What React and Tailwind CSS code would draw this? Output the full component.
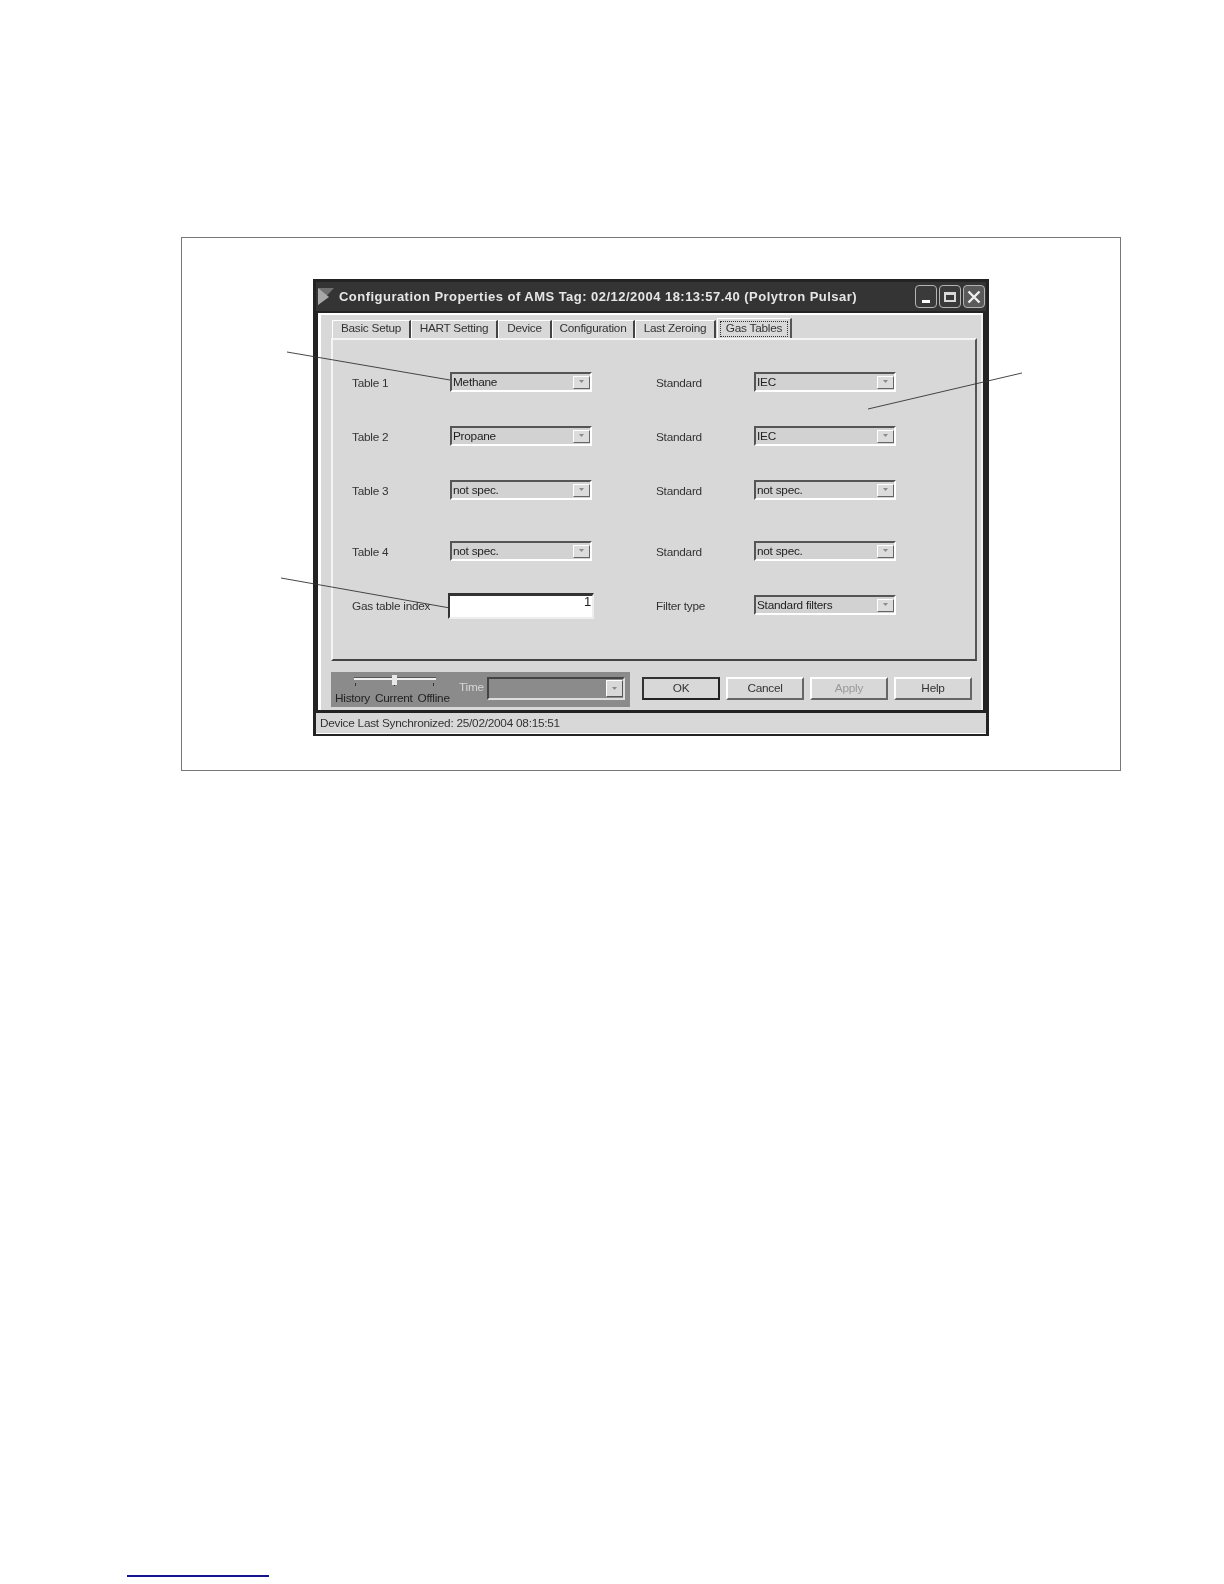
const Arrow = () => (
  <svg width="7" height="4" viewBox="0 0 7 4" className="block">
    <polygon points="1,0 6,0 3.5,3" fill="#8a8a8a" />
  </svg>
);

const Combo = ({ text, className = "" }) => (
  <div className={`w-[142px] h-5 flex items-center border-2 border-t-[#555] border-l-[#555] border-b-white border-r-white bg-[#d2d2d2] ${className}`}>
    <span className="flex-1 pl-[1px] pt-[1px] text-[11.8px] leading-none text-[#222]">{text}</span>
    <div className="w-[17px] h-[13px] flex items-center justify-center bg-[#dcdcdc] border border-t-white border-l-white border-b-[#666] border-r-[#666]">
      <Arrow />
    </div>
  </div>
);

const Label = ({ children, className = "w-[98px]" }) => (
  <div className={`text-[11.8px] leading-none text-[#333] pt-[4px] ${className}`}>{children}</div>
);

const Row = ({ l, lv, r, rv, className = "" }) => (
  <div className={`flex items-center h-5 ${className}`}>
    <div className="w-[304px] flex items-center">
      <Label>{l}</Label>
      <Combo text={lv} />
    </div>
    <div className="flex items-center">
      <Label className="w-[98px]">{r}</Label>
      <Combo text={rv} />
    </div>
  </div>
);

const Tab = ({ w, children, active }) => (
  <div
    className={
      active
        ? "h-5 ml-[1px] px-[2px] pt-[2px] flex bg-[#d8d8d8] border-t border-l border-white border-r-2 border-r-[#555] -mt-[2px]"
        : "h-[18px] pb-[2px] flex items-center justify-center bg-[#d8d8d8] border-t border-l border-white border-r-2 border-r-[#444] text-[11.8px] text-[#333]"
    }
    style={{ width: w }}
  >
    {active ? (
      <div className="flex-1 flex items-center justify-center border border-dotted border-[#333] h-4 text-[11.8px] text-[#333]">
        {children}
      </div>
    ) : (
      children
    )}
  </div>
);

const Btn = ({ children, primary, disabled }) => (
  <div
    className={`w-[78px] h-[23px] flex items-center justify-center text-[11.8px] bg-[#d8d8d8] ${
      primary
        ? "border-2 border-[#222] border-t-[#333] border-l-[#333]"
        : "border-2 border-t-white border-l-white border-b-[#666] border-r-[#666]"
    } ${disabled ? "text-[#9a9a9a]" : "text-[#333]"}`}
  >
    {children}
  </div>
);

const WinBtn = ({ children, className = "bg-[#3a3a3a]" }) => (
  <div className={`w-[22px] h-[23px] flex items-center justify-center rounded-[4px] border-[1.5px] border-[#b4b4b4] ${className}`}>
    {children}
  </div>
);

export default function App() {
  return (
    <div
      className="relative w-[1224px] h-[1584px] bg-white overflow-hidden pt-[237px] pl-[181px] tracking-[-0.25px]"
      style={{ fontFamily: '"Liberation Sans", Arial, sans-serif' }}
    >
      <div className="w-[940px] h-[534px] border border-[#777] pt-[41px] pl-[131px]">
        <div className="w-[676px] h-[457px] flex flex-col bg-[#242424] border-[3px] border-[#232323] blur-[0.35px]">
          {/* Title bar */}
          <div className="h-[29px] shrink-0 flex items-center bg-[#343434] pl-[2px] pr-[1px]">
            <svg width="16" height="17" viewBox="0 0 16 17" className="block shrink-0">
              <polygon points="0,0 16,0 0,17" fill="#6f6f6f" />
              <polygon points="0,0 11,9 0,17" fill="#a8a8a8" />
            </svg>
            <span className="ml-[5px] text-[13px] font-bold tracking-[0.47px] text-[#e6e6e6] whitespace-nowrap">
              Configuration Properties of AMS Tag: 02/12/2004 18:13:57.40 (Polytron Pulsar)
            </span>
            <div className="ml-auto flex gap-[2px]">
              <WinBtn>
                <div className="w-[8px] h-[3px] bg-white mt-[10px]" />
              </WinBtn>
              <WinBtn>
                <div className="w-[12px] h-[10px] border-2 border-t-[3px] border-[#d8d8d8]" />
              </WinBtn>
              <WinBtn className="bg-[#5a5a5a]">
                <svg width="14" height="14" viewBox="0 0 14 14" className="block">
                  <path d="M1.5 1.5 L12.5 12.5 M12.5 1.5 L1.5 12.5" stroke="#f0f0f0" strokeWidth="2.4" />
                </svg>
              </WinBtn>
            </div>
          </div>

          {/* Frame */}
          <div className="h-[402px] shrink-0 mr-[1px] border-t-2 border-l-2 border-[#222] border-r-2 border-b-[3px] bg-[#9a9a9a]">
            <div className="h-full bg-[#d8d8d8] border-t-2 border-l-[3px] border-white border-r-2 border-r-[#f0f0f0] pt-[5px] pl-[10px]">
              {/* Tabs */}
              <div className="flex h-[18px] items-start pl-[1px]">
                <Tab w={79}>Basic Setup</Tab>
                <Tab w={87}>HART Setting</Tab>
                <Tab w={54}>Device</Tab>
                <Tab w={83}>Configuration</Tab>
                <Tab w={81}>Last Zeroing</Tab>
                <Tab w={75} active>Gas Tables</Tab>
              </div>

              {/* Tab pane */}
              <div className="w-[646px] h-[323px] border-l-2 border-t-2 border-[#f4f4f4] border-r-2 border-r-[#555] border-b-2 border-b-[#444] pl-[19px] pt-[32px] bg-[#d8d8d8]">
                <Row l="Table 1" lv="Methane" r="Standard" rv="IEC" />
                <Row l="Table 2" lv="Propane" r="Standard" rv="IEC" className="mt-[34px]" />
                <Row l="Table 3" lv="not spec." r="Standard" rv="not spec." className="mt-[34px]" />
                <Row l="Table 4" lv="not spec." r="Standard" rv="not spec." className="mt-[41px]" />
                <div className="flex items-start h-[26px] mt-[32px]">
                  <div className="w-[304px] flex items-start">
                    <div className="w-[96px] text-[11.8px] leading-none text-[#333] pt-[8px]">Gas table index</div>
                    <div className="w-[146px] h-[26px] border-2 border-t-[3px] border-t-[#333] border-l-[#333] border-b-[#eee] border-r-[#eee] bg-white text-right pr-[1px] text-[13px] leading-[12px] text-[#222]">
                      1
                    </div>
                  </div>
                  <div className="flex items-center mt-[2px]">
                    <Label className="w-[98px]">Filter type</Label>
                    <Combo text="Standard filters" />
                  </div>
                </div>
              </div>

              {/* Bottom row */}
              <div className="flex mt-[11px]">
                <div className="w-[299px] h-[35px] bg-[#8b8b8b] flex">
                  <div className="w-[125px] pt-[5px]">
                    <div className="relative h-[6px] ml-[23px] w-[82px]">
                      <div className="h-[3px] bg-[#f0f0f0] border-t border-[#555]" />
                      <div className="absolute left-[38px] -top-[2px] w-[5px] h-[10px] bg-[#e8e8e8]" />
                    </div>
                    <div className="flex justify-between pl-[24px] pr-[22px] h-[4px]">
                      <div className="w-[1px] h-[3px] bg-[#333]" />
                      <div className="w-[1px] h-[3px] bg-[#333]" />
                      <div className="w-[1px] h-[3px] bg-[#333]" />
                    </div>
                    <div className="flex pl-[4px] gap-[5px] text-[11.8px] leading-none text-[#222] whitespace-nowrap mt-[6px]">
                      <span>History</span>
                      <span>Current</span>
                      <span>Offline</span>
                    </div>
                  </div>
                  <div className="w-[31px] pl-[3px] pt-[10px] text-[11.8px] leading-none text-[#d6d6d6]">Time</div>
                  <div className="w-[138px] h-[23px] mt-[5px] flex items-center justify-end border-2 border-t-[#444] border-l-[#444] border-b-[#ddd] border-r-[#ddd] bg-[#8b8b8b]">
                    <div className="w-[17px] h-[17px] flex items-center justify-center bg-[#d8d8d8] border border-t-white border-l-white border-b-[#555] border-r-[#555]">
                      <Arrow />
                    </div>
                  </div>
                </div>
                <div className="flex gap-[6px] ml-[12px] mt-[5px]">
                  <Btn primary>OK</Btn>
                  <Btn>Cancel</Btn>
                  <Btn disabled>Apply</Btn>
                  <Btn>Help</Btn>
                </div>
              </div>
            </div>
          </div>

          {/* Status bar */}
          <div className="flex-1 flex items-center bg-[#d8d8d8] border-b border-white pl-[4px] pt-[2px] text-[11.8px] text-[#333]">
            Device Last Synchronized: 25/02/2004 08:15:51
          </div>
        </div>
      </div>

      {/* Footnote rule */}
      <div className="w-[142px] h-[1.5px] bg-[#14148c] mt-[804px] -ml-[54px]" />

      {/* Callout lines */}
      <svg className="absolute left-0 top-0 pointer-events-none" width="1224" height="1584" viewBox="0 0 1224 1584">
        <path d="M287 352 L450 380" stroke="#333" strokeWidth="0.9" fill="none" />
        <path d="M281 578 L450 608" stroke="#333" strokeWidth="0.9" fill="none" />
        <path d="M868 409 L1022 373" stroke="#333" strokeWidth="0.9" fill="none" />
      </svg>
    </div>
  );
}
